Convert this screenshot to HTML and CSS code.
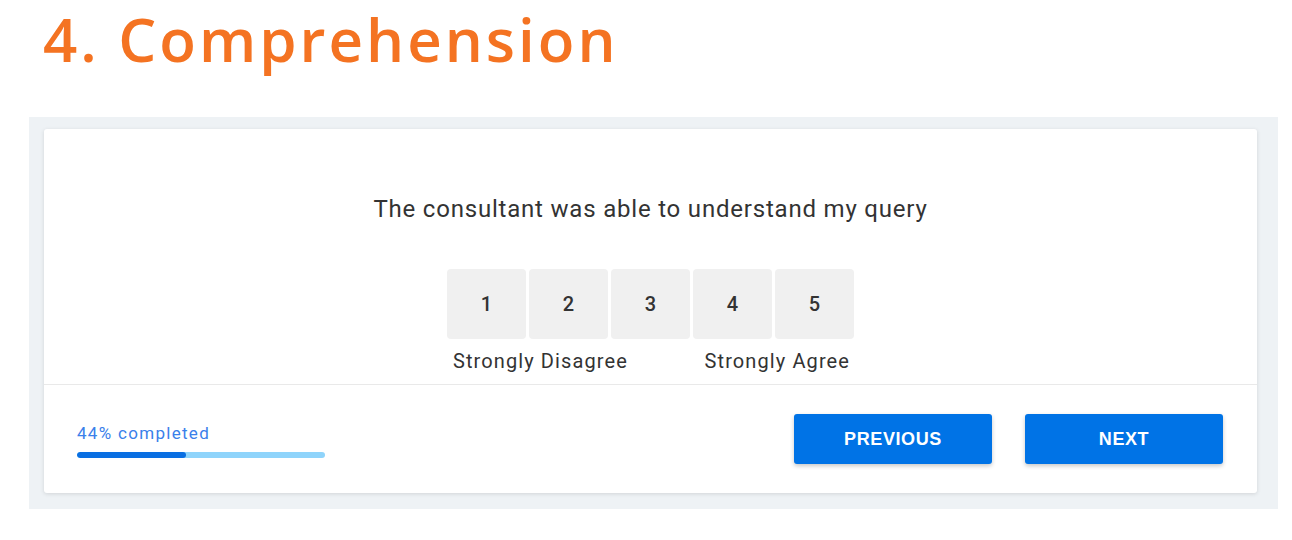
FILE: index.html
```html
<!DOCTYPE html>
<html lang="en">
<head>
<meta charset="utf-8">
<title>4. Comprehension</title>
<link rel="stylesheet" href="styles.css">
</head>
<body>
  <h1 class="title">4. Comprehension</h1>
  <div class="panel">
    <div class="card">
      <div class="question-area">
        <p class="question">The consultant was able to understand my query</p>
        <div class="scale">
          <div class="options">
            <button class="option">1</button>
            <button class="option">2</button>
            <button class="option">3</button>
            <button class="option">4</button>
            <button class="option">5</button>
          </div>
          <div class="scale-labels">
            <span>Strongly Disagree</span>
            <span>Strongly Agree</span>
          </div>
        </div>
      </div>
      <div class="footer">
        <div class="progress">
          <div class="progress-text">44% completed</div>
          <div class="progress-track"><div class="progress-fill" style="width:44%"></div></div>
        </div>
        <div class="actions">
          <button class="btn">PREVIOUS</button>
          <button class="btn">NEXT</button>
        </div>
      </div>
    </div>
  </div>
</body>
</html>
```

FILE: styles.css
```css
html, body {
  margin: 0;
  padding: 0;
  background: #ffffff;
}

body {
  font-family: Roboto, "Liberation Sans", sans-serif;
  width: 1292px;
  height: 540px;
  overflow: hidden;
}

.title {
  margin: 0;
  padding: 3px 0 0 43px;
  height: 113px;
  box-sizing: border-box;
  font-family: "Open Sans", "Noto Sans", sans-serif;
  font-weight: 600;
  font-size: 60px;
  line-height: 72px;
  letter-spacing: 3px;
  color: #f47322;
}

.panel {
  margin: 4px 0 0 29px;
  width: 1249px;
  height: 392px;
  box-sizing: border-box;
  background: #eef2f5;
  padding: 12px 21px 16px 15px;
}

.card {
  background: #ffffff;
  border-radius: 3px;
  box-shadow: 0 1px 4px rgba(0, 0, 0, 0.12);
  height: 364px;
  display: flex;
  flex-direction: column;
}

.question-area {
  display: flex;
  flex-direction: column;
  align-items: center;
  padding-top: 65px;
  padding-bottom: 11px;
  border-bottom: 1px solid #e9e9e9;
}

.question {
  margin: 0;
  font-size: 24px;
  line-height: 30px;
  letter-spacing: 0.8px;
  color: #333333;
}

.scale {
  margin-top: 45px;
  display: flex;
  flex-direction: column;
}

.options {
  display: flex;
  gap: 3px;
}

.option {
  width: 79px;
  height: 70px;
  border: none;
  border-radius: 4px;
  background: #f0f0f0;
  font-family: Roboto, "Liberation Sans", sans-serif;
  font-size: 20px;
  font-weight: 500;
  color: #333333;
  padding: 0;
}

.scale-labels {
  display: flex;
  justify-content: space-between;
  margin-top: 10px;
  padding: 0 4px 0 6px;
  font-size: 20px;
  line-height: 24px;
  letter-spacing: 1.1px;
  color: #333333;
}

.footer {
  flex: 1;
  display: flex;
  align-items: center;
  justify-content: space-between;
  padding: 0 34px 0 33px;
}

.progress {
  width: 248px;
  padding-top: 2px;
}

.progress-text {
  font-size: 17px;
  line-height: 20px;
  letter-spacing: 1.3px;
  color: #3a80ea;
  margin-bottom: 9px;
}

.progress-track {
  height: 6px;
  border-radius: 3px;
  background: #8fd4fb;
  overflow: hidden;
}

.progress-fill {
  height: 100%;
  border-radius: 3px;
  background: #0a6fe2;
}

.actions {
  display: flex;
  gap: 33px;
}

.btn {
  width: 198px;
  height: 50px;
  border: none;
  border-radius: 3px;
  background: #0073e6;
  color: #ffffff;
  font-family: "Liberation Sans", Arial, sans-serif;
  font-weight: bold;
  font-size: 18px;
  letter-spacing: 0.6px;
  box-shadow: 0 2px 4px rgba(0, 0, 0, 0.22);
  padding: 0;
}
```
